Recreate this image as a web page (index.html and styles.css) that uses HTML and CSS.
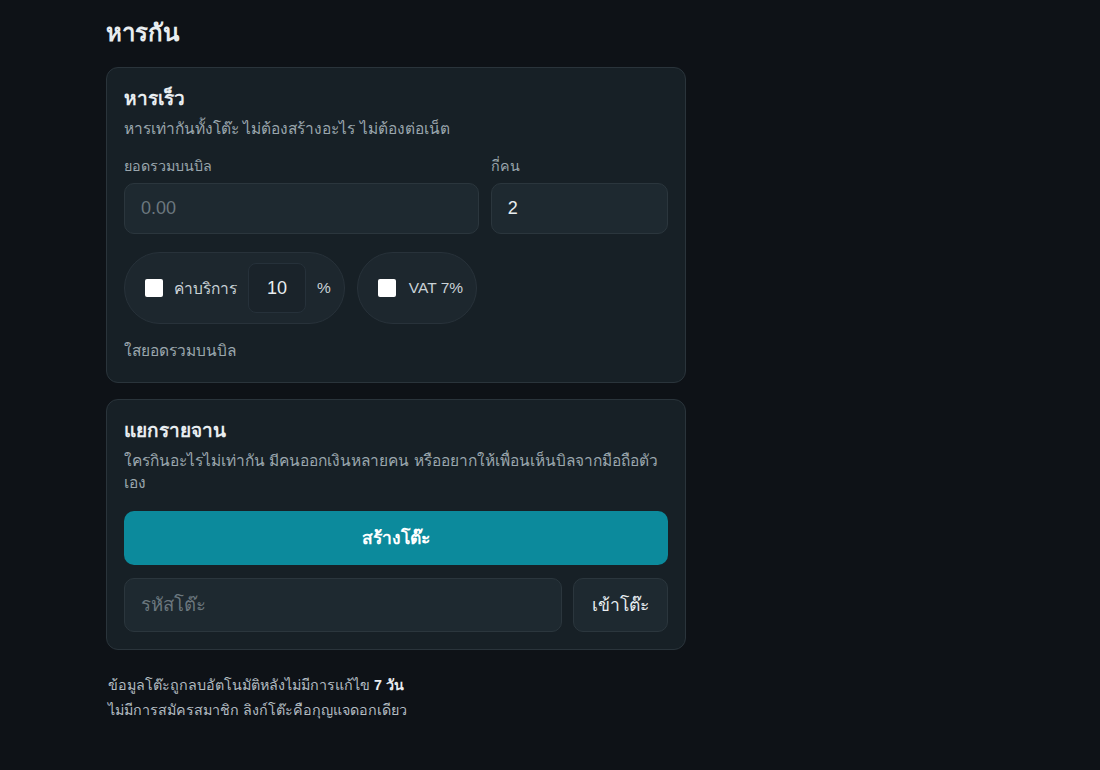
FILE: index.html
```html
<!DOCTYPE html>
<html lang="th">
<head>
  <meta charset="UTF-8">
  <meta name="viewport" content="width=device-width, initial-scale=1.0">
  <title>หารกัน</title>
  <link rel="stylesheet" href="styles.css">
</head>
<body>
  <main class="page">
    <h1 class="title">หารกัน</h1>

    <section class="card">
      <h2 class="card-title">หารเร็ว</h2>
      <p class="card-desc">หารเท่ากันทั้งโต๊ะ ไม่ต้องสร้างอะไร ไม่ต้องต่อเน็ต</p>
      <div class="fields">
        <label class="field">
          <span class="field-label">ยอดรวมบนบิล</span>
          <input class="input" type="text" placeholder="0.00">
        </label>
        <label class="field">
          <span class="field-label">กี่คน</span>
          <input class="input" type="text" value="2">
        </label>
      </div>
      <div class="options">
        <div class="pill">
          <span class="check"></span>
          <span>ค่าบริการ</span>
          <input class="pct" type="text" value="10">
          <span>%</span>
        </div>
        <div class="pill">
          <span class="check"></span>
          <span class="pill-text">VAT 7%</span>
        </div>
      </div>
      <p class="hint">ใสยอดรวมบนบิล</p>
    </section>

    <section class="card">
      <h2 class="card-title">แยกรายจาน</h2>
      <p class="card-desc">ใครกินอะไรไม่เท่ากัน มีคนออกเงินหลายคน หรืออยากให้เพื่อนเห็นบิลจากมือถือตัวเอง</p>
      <button class="primary">สร้างโต๊ะ</button>
      <div class="join">
        <input class="input" type="text" placeholder="รหัสโต๊ะ">
        <button class="secondary">เข้าโต๊ะ</button>
      </div>
    </section>

    <footer class="note">
      <p>ข้อมูลโต๊ะถูกลบอัตโนมัติหลังไม่มีการแก้ไข <b>7 วัน</b></p>
      <p>ไม่มีการสมัครสมาชิก ลิงก์โต๊ะคือกุญแจดอกเดียว</p>
    </footer>
  </main>
</body>
</html>
```

FILE: styles.css
```css
body {
  margin: 0;
  background: #0e1217;
  color: #e8edf0;
  font-family: "Liberation Sans", "Noto Sans", sans-serif;
}
.page {
  width: 580px;
  margin-left: 106px;
  padding-top: 16px;
}
.title {
  margin: 0 0 17px;
  font-size: 24px;
  line-height: 34px;
  font-weight: bold;
}
.card {
  background: #172026;
  border: 1px solid #2a343b;
  border-radius: 12px;
  padding: 18px 17px 17px;
  margin-bottom: 16px;
}
.card-title {
  margin: 0;
  font-size: 19px;
  line-height: 26px;
  font-weight: bold;
}
.card-desc {
  margin: 6px 0 17px;
  font-size: 15.5px;
  line-height: 22px;
  color: #9aa6ad;
}
.fields {
  display: grid;
  grid-template-columns: 2fr 1fr;
  gap: 12px;
}
.field {
  display: flex;
  flex-direction: column;
  gap: 8px;
}
.field-label {
  font-size: 14.3px;
  line-height: 18px;
  color: #9aa6ad;
}
.input {
  box-sizing: border-box;
  height: 51px;
  width: 100%;
  background: #1e2930;
  border: 1px solid #2b363d;
  border-radius: 10px;
  padding: 0 16px;
  font: inherit;
  font-size: 18px;
  color: #e8edf0;
  outline: none;
}
.input::placeholder {
  color: #6b777e;
}
.options {
  display: flex;
  gap: 12px;
  margin-top: 18px;
}
.pill {
  display: flex;
  align-items: center;
  gap: 11px;
  height: 72px;
  box-sizing: border-box;
  padding: 0 13px 0 20px;
  background: #1d272e;
  border: 1px solid #28323a;
  border-radius: 36px;
  font-size: 15.5px;
  color: #c9d2d7;
}
.pill-text {
  margin-left: 2px;
}
.check {
  width: 18px;
  height: 18px;
  background: #ffffff;
  border-radius: 2px;
}
.pct {
  box-sizing: border-box;
  width: 58px;
  height: 50px;
  background: #1a232a;
  border: 1px solid #26313a;
  border-radius: 8px;
  text-align: center;
  font: inherit;
  font-size: 18px;
  color: #e8edf0;
  outline: none;
}
.hint {
  margin: 16px 0 3px;
  font-size: 15.5px;
  line-height: 22px;
  color: #9aa6ad;
}
.primary {
  display: block;
  width: 100%;
  height: 54px;
  margin-top: 13px;
  border: none;
  border-radius: 10px;
  background: #0c8a9c;
  color: #ffffff;
  font: inherit;
  font-size: 17.5px;
  font-weight: bold;
}
.join {
  display: flex;
  gap: 11px;
  margin-top: 13px;
}
.join .input {
  height: 54px;
  font-size: 18.5px;
}
.secondary {
  flex: none;
  width: 95px;
  height: 54px;
  background: #1e2930;
  border: 1px solid #2b363d;
  border-radius: 10px;
  color: #e8edf0;
  font: inherit;
  font-size: 17.5px;
}
.note {
  margin-top: 23px;
  padding-left: 2px;
  font-size: 14.3px;
  line-height: 25px;
  color: #b3bcc2;
}
.note p {
  margin: 0;
}
.note b {
  color: #e8edf0;
}
```
